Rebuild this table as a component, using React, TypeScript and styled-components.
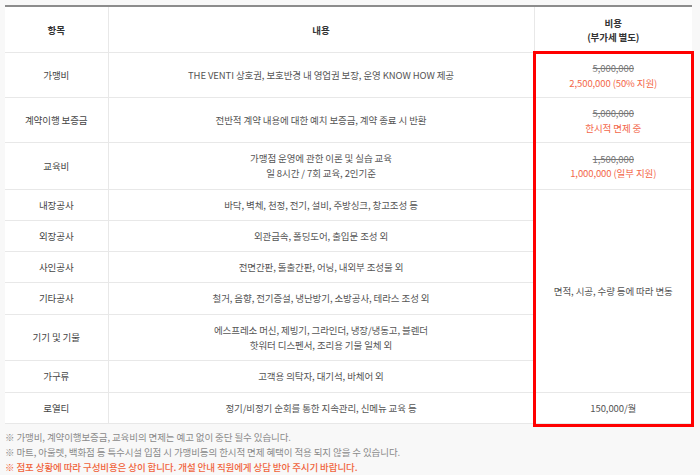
import React from "react"
import styled, {createGlobalStyle} from "styled-components";

const GlobalStyle = createGlobalStyle`
  html, body {
    margin: 0;
    padding: 0;
    background-color: #f8f8f8;
  }
  body {
    font-family: "Noto Sans CJK KR", "Noto Sans", sans-serif;
    color: #555;
  }
`

const StyledPage = styled.div`
  padding: 5px 8px 0 5px;
`

const StyledTableWrap = styled.div`
  position: relative;
`

const StyledTable = styled.table`
  width: 100%;
  border-collapse: collapse;
  background-color: white;
  border-top: 2px solid #8c8c8c;
  table-layout: fixed;
  font-size: 9.5px;
  letter-spacing: -0.1px;
`

const StyledHeadCell = styled.th`
  font-weight: bold;
  color: #333;
  line-height: 14px;
  padding: 9px 10px 8px;
  border: 1px solid #e8e8e8;
  border-top: none;
  &:first-child { border-left: none; }
  &:last-child { border-right: none; }
`

const StyledCell = styled.td<{ $label?: boolean }>`
  text-align: center;
  line-height: 15.3px;
  padding: 8px 10px 7px;
  border: 1px solid #e8e8e8;
  color: ${props => props.$label ? "#444" : "#555"};
  &:first-child { border-left: none; }
  &:last-child { border-right: none; }
`

const StyledCostCell = styled(StyledCell)`
  line-height: 14.5px;
  border-right: none;
`

const StyledStrike = styled.div`
  text-decoration: line-through;
  color: #777;
`

const StyledDiscount = styled.div`
  color: #f3674a;
`

const StyledHighlight = styled.div`
  position: absolute;
  top: 46px;
  left: 528px;
  width: 161px;
  bottom: -3px;
  border: 3px solid #ff0000;
  box-sizing: border-box;
  pointer-events: none;
`

const StyledNotes = styled.div`
  padding-top: 6px;
  font-size: 9.5px;
  letter-spacing: -0.1px;
  line-height: 15px;
`

const StyledNote = styled.p<{ $warn?: boolean }>`
  margin: 0;
  color: ${props => props.$warn ? "#f0643c" : "#8a8a8a"};
  font-weight: ${props => props.$warn ? 500 : "normal"};
`

type Row = {
    label: string,
    content: string[],
}

const rows: Row[] = [
    {label: "내장공사", content: ["바닥, 벽체, 천정, 전기, 설비, 주방싱크, 창고조성 등"]},
    {label: "외장공사", content: ["외관금속, 폴딩도어, 출입문 조성 외"]},
    {label: "사인공사", content: ["전면간판, 돌출간판, 어닝, 내외부 조성물 외"]},
    {label: "기타공사", content: ["철거, 음향, 전기증설, 냉난방기, 소방공사, 테라스 조성 외"]},
    {label: "기기 및 기물", content: ["에스프레소 머신, 제빙기, 그라인더, 냉장/냉동고, 블렌더", "핫워터 디스펜서, 조리용 기물 일체 외"]},
    {label: "가구류", content: ["고객용 의탁자, 대기석, 바체어 외"]},
]

const Lines: React.FC<{ lines: string[] }> = ({lines}) => (
    <>
        {lines.map((l, i) => <div key={i}>{l}</div>)}
    </>
)

export default function App() {
    return (
        <>
            <GlobalStyle/>
            <StyledPage>
                <StyledTableWrap>
                    <StyledTable>
                        <colgroup>
                            <col style={{width: 103}}/>
                            <col style={{width: 426}}/>
                            <col/>
                        </colgroup>
                        <thead>
                        <tr>
                            <StyledHeadCell>항목</StyledHeadCell>
                            <StyledHeadCell>내용</StyledHeadCell>
                            <StyledHeadCell>비용<br/>(부가세 별도)</StyledHeadCell>
                        </tr>
                        </thead>
                        <tbody>
                        <tr>
                            <StyledCell $label>가맹비</StyledCell>
                            <StyledCell>THE VENTI 상호권, 보호반경 내 영업권 보장, 운영 KNOW HOW 제공</StyledCell>
                            <StyledCostCell>
                                <StyledStrike>5,000,000</StyledStrike>
                                <StyledDiscount>2,500,000 (50% 지원)</StyledDiscount>
                            </StyledCostCell>
                        </tr>
                        <tr>
                            <StyledCell $label>계약이행 보증금</StyledCell>
                            <StyledCell>전반적 계약 내용에 대한 예치 보증금, 계약 종료 시 반환</StyledCell>
                            <StyledCostCell>
                                <StyledStrike>5,000,000</StyledStrike>
                                <StyledDiscount>한시적 면제 중</StyledDiscount>
                            </StyledCostCell>
                        </tr>
                        <tr>
                            <StyledCell $label>교육비</StyledCell>
                            <StyledCell>
                                <Lines lines={["가맹점 운영에 관한 이론 및 실습 교육", "일 8시간 / 7회 교육, 2인기준"]}/>
                            </StyledCell>
                            <StyledCostCell>
                                <StyledStrike>1,500,000</StyledStrike>
                                <StyledDiscount>1,000,000 (일부 지원)</StyledDiscount>
                            </StyledCostCell>
                        </tr>
                        {rows.map((row, i) => (
                            <tr key={row.label}>
                                <StyledCell $label>{row.label}</StyledCell>
                                <StyledCell><Lines lines={row.content}/></StyledCell>
                                {i === 0 && (
                                    <StyledCostCell rowSpan={rows.length}>
                                        면적, 시공, 수량 등에 따라 변동
                                    </StyledCostCell>
                                )}
                            </tr>
                        ))}
                        <tr>
                            <StyledCell $label>로열티</StyledCell>
                            <StyledCell>정기/비정기 순회를 통한 지속관리, 신메뉴 교육 등</StyledCell>
                            <StyledCostCell>150,000/월</StyledCostCell>
                        </tr>
                        </tbody>
                    </StyledTable>
                    <StyledHighlight/>
                </StyledTableWrap>
                <StyledNotes>
                    <StyledNote>※ 가맹비, 계약이행보증금, 교육비의 면제는 예고 없이 중단 될수 있습니다.</StyledNote>
                    <StyledNote>※ 마트, 아울렛, 백화점 등 특수시설 입점 시 가맹비등의 한시적 면제 혜택이 적용 되지 않을 수 있습니다.</StyledNote>
                    <StyledNote $warn>※ 점포 상황에 따라 구성비용은 상이 합니다. 개설 안내 직원에게 상담 받아 주시기 바랍니다.</StyledNote>
                </StyledNotes>
            </StyledPage>
        </>
    )
}
